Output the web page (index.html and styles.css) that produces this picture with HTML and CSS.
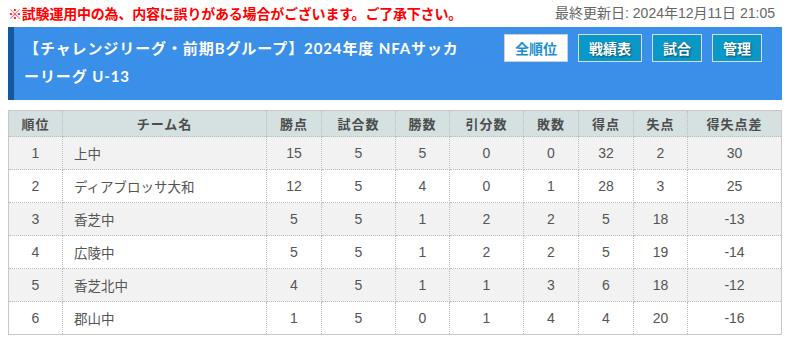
FILE: index.html
```html
<!DOCTYPE html>
<html lang="ja">
<head>
<meta charset="utf-8">
<title>順位表</title>
<link rel="stylesheet" href="styles.css">
</head>
<body>
<div class="page">
  <div class="notice-bar">
    <p class="notice">※試験運用中の為、内容に誤りがある場合がございます。ご了承下さい。</p>
    <p class="updated">最終更新日: 2024年12月11日 21:05</p>
  </div>
  <div class="banner">
    <h1 class="title">【チャレンジリーグ・前期Bグループ】2024年度 NFAサッカーリーグ U-13</h1>
    <nav class="nav">
      <a class="btn btn-active">全順位</a>
      <a class="btn">戦績表</a>
      <a class="btn">試合</a>
      <a class="btn">管理</a>
    </nav>
  </div>
  <table class="standings">
    <colgroup>
      <col class="c-rank"><col class="c-team"><col class="c-pts"><col class="c-games"><col class="c-win">
      <col class="c-draw"><col class="c-loss"><col class="c-gf"><col class="c-ga"><col class="c-gd">
    </colgroup>
    <thead>
      <tr><th>順位</th><th>チーム名</th><th>勝点</th><th>試合数</th><th>勝数</th><th>引分数</th><th>敗数</th><th>得点</th><th>失点</th><th>得失点差</th></tr>
    </thead>
    <tbody>
      <tr><td>1</td><td class="team">上中</td><td>15</td><td>5</td><td>5</td><td>0</td><td>0</td><td>32</td><td>2</td><td>30</td></tr>
      <tr><td>2</td><td class="team">ディアブロッサ大和</td><td>12</td><td>5</td><td>4</td><td>0</td><td>1</td><td>28</td><td>3</td><td>25</td></tr>
      <tr><td>3</td><td class="team">香芝中</td><td>5</td><td>5</td><td>1</td><td>2</td><td>2</td><td>5</td><td>18</td><td>-13</td></tr>
      <tr><td>4</td><td class="team">広陵中</td><td>5</td><td>5</td><td>1</td><td>2</td><td>2</td><td>5</td><td>19</td><td>-14</td></tr>
      <tr><td>5</td><td class="team">香芝北中</td><td>4</td><td>5</td><td>1</td><td>1</td><td>3</td><td>6</td><td>18</td><td>-12</td></tr>
      <tr><td>6</td><td class="team">郡山中</td><td>1</td><td>5</td><td>0</td><td>1</td><td>4</td><td>4</td><td>20</td><td>-16</td></tr>
    </tbody>
  </table>
</div>
</body>
</html>
```
FILE: styles.css
```css
* { box-sizing: border-box; }
body {
  margin: 0;
  padding: 0 8px;
  background: #fff;
  font-family: "Liberation Sans", "Noto Sans CJK JP", sans-serif;
  color: #555;
}
.page { width: 774px; }
.notice-bar {
  display: flex;
  justify-content: space-between;
  align-items: center;
  height: 27px;
  padding-right: 7px;
  padding-bottom: 2px;
}
.notice-bar p { margin: 0; font-size: 14px; line-height: 20px; }
.notice {
  color: #ff0000;
  font-weight: bold;
  font-family: "Noto Sans CJK JP", sans-serif;
  letter-spacing: -0.2px;
}
.updated { color: #666; font-family: "Liberation Sans", "Noto Sans CJK JP", sans-serif; }

.banner {
  display: flex;
  align-items: flex-start;
  height: 73px;
  background: #3a90e8;
  border-left: 6px solid #1558a0;
  padding: 7px 0 0 10px;
}
.title {
  margin: 0;
  width: 440px;
  color: #fff;
  font-family: "Lato", "Noto Sans CJK JP", sans-serif;
  font-weight: bold;
  font-size: 15px;
  line-height: 28px;
  letter-spacing: 0.9px;
}
.nav {
  display: flex;
  gap: 10px;
  margin-left: 40px;
}
.btn {
  display: flex;
  align-items: center;
  justify-content: center;
  height: 28px;
  padding: 0 10px;
  border: 1px solid #d8dde2;
  background: #0a98c8;
  color: #fff;
  font-family: "Noto Sans CJK JP", sans-serif;
  font-weight: bold;
  font-size: 14px;
  text-shadow: 1px 1px 2px rgba(0, 0, 0, 0.5);
}
.btn-active {
  background: #fff;
  color: #1a8fd0;
  border-color: #c8d0d8;
  text-shadow: none;
}

.standings {
  margin-top: 10px;
  width: 774px;
  table-layout: fixed;
  border-collapse: collapse;
  border: 1px solid #c8c8c8;
  font-size: 14px;
}
.c-rank { width: 54px; }
.c-team { width: 204px; }
.c-pts { width: 55px; }
.c-games { width: 74px; }
.c-win { width: 54px; }
.c-draw { width: 74px; }
.c-loss { width: 55px; }
.c-gf { width: 55px; }
.c-ga { width: 54px; }
.c-gd { width: 94px; }
.standings th, .standings td {
  border: 1px dotted #bdbdbd;
  text-align: center;
  padding: 0;
}
.standings th {
  height: 26px;
  background: #d5e0e0;
  color: #4d4d4d;
  font-family: "Noto Sans CJK JP", sans-serif;
  font-size: 13px;
  font-weight: bold;
  letter-spacing: 1px;
  border-top: 1px solid #c8c8c8;
}
.standings td {
  height: 33px;
  color: #555;
}
.standings tbody tr:nth-child(odd) td { background: #f2f2f2; }
.standings tbody tr:nth-child(even) td { background: #fff; }
.standings td.team {
  text-align: left;
  padding-left: 11px;
  font-family: "Noto Sans CJK JP", sans-serif;
  font-size: 13.5px;
}
.standings th:first-child, .standings td:first-child { border-left: 1px solid #c8c8c8; }
.standings th:last-child, .standings td:last-child { border-right: 1px solid #c8c8c8; }
```
